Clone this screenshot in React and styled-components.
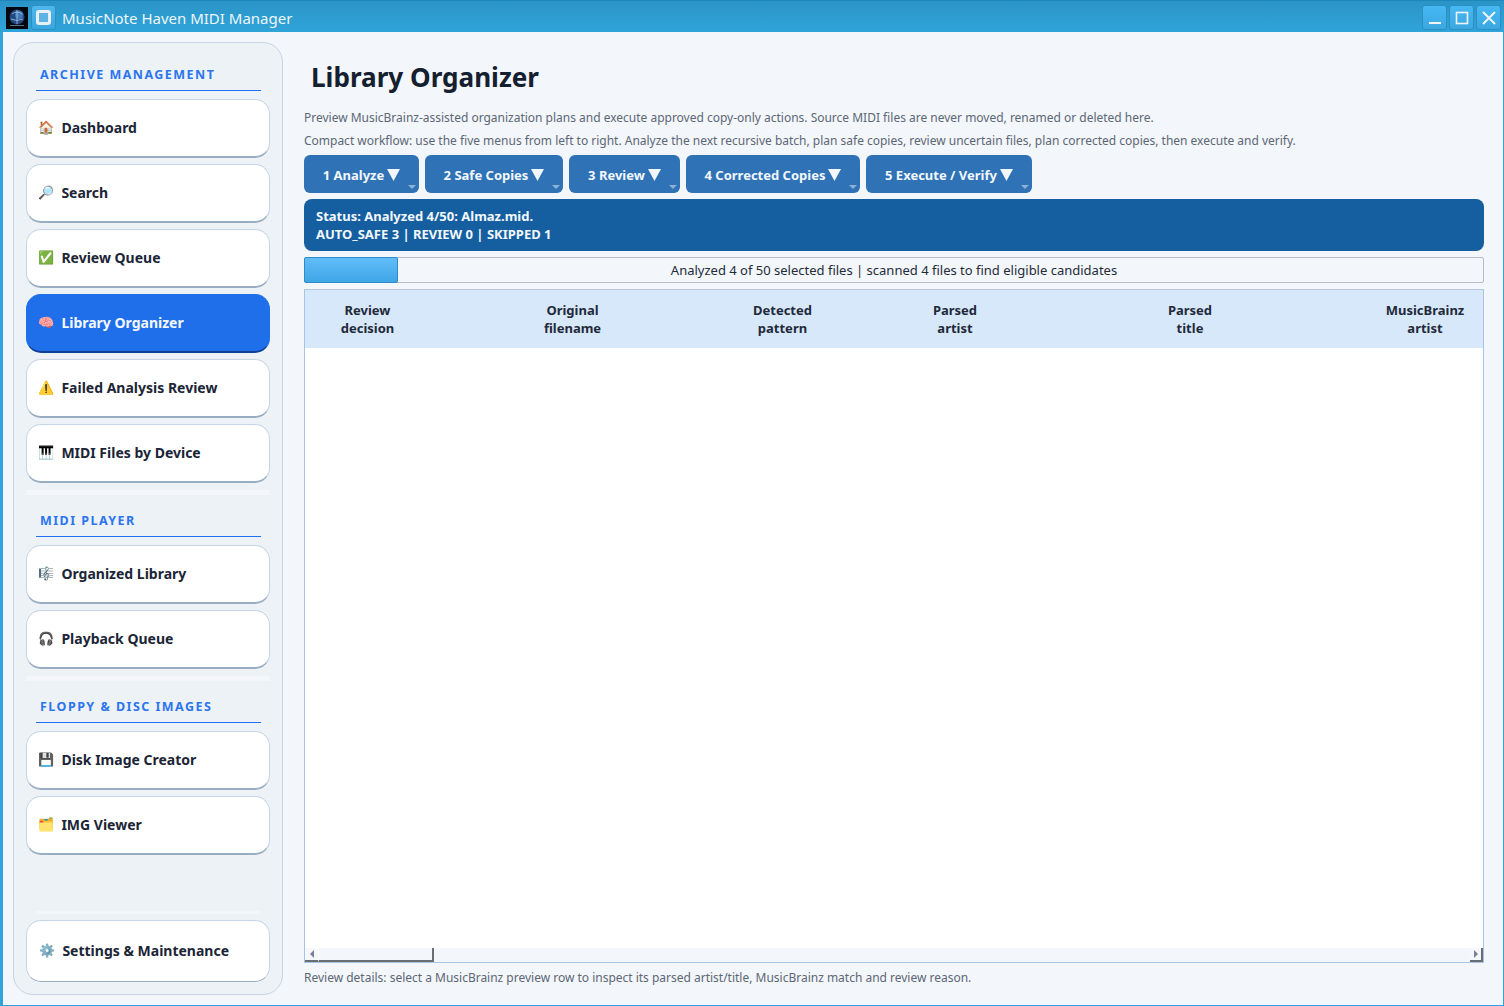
import React from "react";
import styled, { createGlobalStyle } from "styled-components";

const Global = createGlobalStyle`
  html, body { margin: 0; padding: 0; height: 100%; overflow: hidden; }
  body { font-family: "Noto Sans", "Open Sans", sans-serif; background: #f3f6fb; }
  #root { height: 100%; }
`;

const Window = styled.div`
  width: 1504px; height: 1006px; display: flex; flex-direction: column;
  background: #2ea3dc; box-sizing: border-box; overflow: hidden;
`;
const TitleBar = styled.header`
  height: 32px; flex: none; display: flex; align-items: center; box-sizing: border-box;
  padding: 2px 3px 0 6px;
  border-top: 1px solid #1d87bb;
  background: linear-gradient(#2b94c7, #2fa4d9);
`;
const AppLogo = styled.svg`width: 22px; height: 22px; flex: none; display: block;`;
const PinButton = styled.div`
  width: 25px; height: 25px; margin-left: 3px; flex: none; box-sizing: border-box;
  border: 1px solid #2b8fc0; border-radius: 3px; background: linear-gradient(#4fb7ec, #3ba7e0);
  display: flex; align-items: center; justify-content: center;
`;
const PinGlyph = styled.div`
  width: 9px; height: 9px; border: 3px solid #e9eff5; border-radius: 3px; background: #5cb4e4;
`;
const WindowTitle = styled.div`
  margin-left: 6px; flex: 1; color: #eef6fb; font-size: 15px;
`;
const WinButton = styled.div`
  width: 25px; height: 25px; margin-left: 2px; box-sizing: border-box;
  border: 1px solid #2b8fc0; border-radius: 3px; background: linear-gradient(#47b8f4, #3ba7e0);
  display: flex; align-items: center; justify-content: center;
`;
const Body = styled.div`
  flex: 1; min-height: 0; margin: 0 1px 1px 3px; background: #f3f6fb;
  display: flex; padding: 10px 0 10px 10px; gap: 21px; box-sizing: border-box;
`;
const Sidebar = styled.nav`
  width: 270px; flex: none; box-sizing: border-box; border: 1px solid #c6d4e5;
  border-radius: 20px; background: #edf2f7; padding: 17px 12px 12px 12px;
  display: flex; flex-direction: column;
`;
const SectionTitle = styled.div`
  margin: ${p => p.$first ? "6px" : "17px"} 9px 0 10px; padding: 0 0 7px 4px; height: 17px;
  line-height: 17px; border-bottom: 1px solid #1f6ff0; color: #2c75ee;
  font-size: 12.5px; font-weight: 700; letter-spacing: 1.47px;
`;
const NavList = styled.div`
  display: flex; flex-direction: column; gap: 6px; margin-top: 8px;
`;
const NavItem = styled.div`
  height: 59px; box-sizing: border-box; display: flex; align-items: center; padding: 0 0 2px 12px;
  border-radius: 15px; font-size: 14px; font-weight: 700;
  border: 1px solid ${p => p.$active ? "#1f6feb" : "#c6d4e5"};
  border-bottom: 2px solid ${p => p.$active ? "#0f3f96" : "#98adc2"};
  background: ${p => p.$active ? "#1f6feb" : "#ffffff"};
  color: ${p => p.$active ? "#f5f9ff" : "#1b2536"};
`;
const SettingsItem = styled(NavItem)`
  height: 62px; margin-top: 6px; padding-left: 13px; border-bottom: 1px solid #98adc2;
`;
const NavIcon = styled.span`
  width: 15px; height: 15px; font-size: 13px; line-height: 15px; margin-right: 7.4px; flex: none;
  display: flex; align-items: center; justify-content: center;
  font-family: "Noto Color Emoji", "DejaVu Sans", sans-serif; font-weight: 400;
`;
const Separator = styled.div`
  height: 5px; margin-top: 7px; background: #f3f6fb;
`;
const Spacer = styled.div`flex: 1;`;
const ThinSeparator = styled.div`
  height: 3px; margin: 0 10px 0 10px; background: #f3f6fb;
`;
const Main = styled.main`
  flex: 1; min-width: 0; padding: 0 19px 0 0; display: flex; flex-direction: column; position: relative;
`;
const PageTitle = styled.h1`
  margin: 15px 0 0 7px; height: 40px; line-height: 40px; font-size: 26.1px; font-weight: 700; color: #14202f;
`;
const Help = styled.p`
  margin: ${p => p.$first ? "12px" : "5px"} 0 0 0; height: 18px; line-height: 18px; font-size: 11.99px; color: #5c6775;
`;
const MenuRow = styled.div`display: flex; gap: 6px; margin-top: 5px;`;
const MenuButton = styled.div`
  height: 38px; box-sizing: border-box; border-radius: 6px; background: #2f72b6; color: #f2f7fc;
  font-size: 13px; font-weight: 700; display: flex; align-items: center; justify-content: center;
  position: relative; width: ${p => p.$w}px; gap: 3px; padding-top: 1px;
`;
const Caret = styled.svg`width: 13px; height: 12px; display: block;`;
const MenuMark = styled.span`
  position: absolute; right: 3px; bottom: 4px; width: 0; height: 0;
  border-left: 4px solid transparent; border-right: 4px solid transparent; border-top: 4px solid #8db0d6;
`;
const Status = styled.div`
  margin-top: 6px; height: 52px; box-sizing: border-box; padding: 8px 12px; border-radius: 8px;
  background: #155fa0; color: #f2f7fc; font-size: 13px; font-weight: 700; line-height: 18px;
`;
const Progress = styled.div`
  margin-top: 6px; height: 26px; box-sizing: border-box; position: relative; display: flex;
  align-items: center; justify-content: center; background: #f3f6fb; border-radius: 2px;
  border: 1px solid #b5bcc6; font-size: 13px; color: #232c38;
`;
const ProgressFill = styled.div`
  position: absolute; left: -1px; top: -1px; bottom: -1px; width: 94px; box-sizing: border-box;
  border: 1px solid #2f8cc7; border-radius: 2px; background: linear-gradient(#62bdf8, #3ea6e6);
`;
const ProgressText = styled.span`position: relative;`;
const Table = styled.section`
  margin-top: 6px; flex: 1; min-height: 0; box-sizing: border-box; background: #fff;
  border: 1px solid #a8c4e4; border-top-color: #b7c7da; display: flex; flex-direction: column; overflow: hidden;
`;
const HeaderRow = styled.div`
  display: grid; grid-template-columns: 125px 285px 135px 210px 260px 210px; width: 1225px;
  height: 58px; flex: none; background: #d8e8fb;
`;
const HeaderCell = styled.div`
  display: flex; align-items: center; justify-content: center; text-align: center; white-space: pre-line;
  font-size: 13px; font-weight: 700; line-height: 18px; color: #1f2a3a;
`;
const TableBody = styled.div`flex: 1; background: #fff;`;
const ScrollBar = styled.div`
  height: 14px; flex: none; background: #f3f6fb; display: flex; position: relative;
`;
const ScrollEnd = styled.div`
  width: 13px; box-sizing: border-box; display: flex; align-items: center; justify-content: center;
  background: #f5f7fb; border-bottom: 2px solid #6a6d72;
  border-right: ${p => p.$right ? "2px solid #6a6d72" : "none"};
  margin-left: ${p => p.$right ? "auto" : "0"};
`;
const ScrollThumb = styled.div`
  width: 116px; box-sizing: border-box; background: #f3f6fb;
  border-left: 1px solid #fff; border-bottom: 2px solid #6a6d72; border-right: 2px solid #6a6d72;
`;
const Arrow = styled.span`
  width: 0; height: 0; border-top: 4px solid transparent; border-bottom: 4px solid transparent;
  ${p => p.$right ? "border-left: 4px solid #77809a;" : "border-right: 4px solid #77809a;"}
`;
const Details = styled.div`
  height: 18px; line-height: 18px; margin: 6px 0 8px 0; font-size: 11.99px; color: #5c6775;
`;

const menus = [["1 Analyze", 115], ["2 Safe Copies", 138], ["3 Review", 111], ["4 Corrected Copies", 174], ["5 Execute / Verify", 166]];
const headers = ["Review\ndecision", "Original\nfilename", "Detected\npattern", "Parsed\nartist", "Parsed\ntitle", "MusicBrainz\nartist"];

const Nav = ({ icon, label, active }) => (
  <NavItem $active={active}><NavIcon>{icon}</NavIcon>{label}</NavItem>
);

export default function App() {
  return (
    <Window>
      <Global />
      <TitleBar>
        <AppLogo viewBox="0 0 22 22">
          <rect width="22" height="22" fill="#05070f" />
          <circle cx="11" cy="10" r="7.5" fill="#20477f" />
          <circle cx="13" cy="8" r="4" fill="#3f78b8" />
          <path d="M6 7q5-4 10 0M5 12q6 3 12 0M11 3v14" stroke="#a8c6e6" strokeWidth="0.8" fill="none" />
          <rect x="4" y="18" width="14" height="1" fill="#5a6f8c" />
        </AppLogo>
        <PinButton><PinGlyph /></PinButton>
        <WindowTitle>MusicNote Haven MIDI Manager</WindowTitle>
        <WinButton>
          <svg width="14" height="14" viewBox="0 0 14 14"><rect x="1" y="11" width="12" height="2" fill="#f0f4f8" /></svg>
        </WinButton>
        <WinButton>
          <svg width="14" height="14" viewBox="0 0 14 14"><rect x="1.5" y="1.5" width="11" height="11" fill="none" stroke="#f0f4f8" strokeWidth="1.6" /></svg>
        </WinButton>
        <WinButton>
          <svg width="14" height="14" viewBox="0 0 14 14"><path d="M1 1l12 12M13 1L1 13" stroke="#f0f4f8" strokeWidth="2" /></svg>
        </WinButton>
      </TitleBar>
      <Body>
        <Sidebar>
          <SectionTitle $first>ARCHIVE MANAGEMENT</SectionTitle>
          <NavList>
            <Nav icon="🏠" label="Dashboard" />
            <Nav icon="🔎" label="Search" />
            <Nav icon="✅" label="Review Queue" />
            <Nav icon="🧠" label="Library Organizer" active />
            <Nav icon="⚠️" label="Failed Analysis Review" />
            <Nav icon="🎹" label="MIDI Files by Device" />
          </NavList>
          <Separator />
          <SectionTitle>MIDI PLAYER</SectionTitle>
          <NavList>
            <Nav icon="🎼" label="Organized Library" />
            <Nav icon="🎧" label="Playback Queue" />
          </NavList>
          <Separator />
          <SectionTitle>FLOPPY &amp; DISC IMAGES</SectionTitle>
          <NavList>
            <Nav icon="💾" label="Disk Image Creator" />
            <Nav icon="🗂️" label="IMG Viewer" />
          </NavList>
          <Spacer />
          <ThinSeparator />
          <SettingsItem><NavIcon>⚙️</NavIcon>Settings &amp; Maintenance</SettingsItem>
        </Sidebar>
        <Main>
          <PageTitle>Library Organizer</PageTitle>
          <Help $first>Preview MusicBrainz-assisted organization plans and execute approved copy-only actions. Source MIDI files are never moved, renamed or deleted here.</Help>
          <Help>Compact workflow: use the five menus from left to right. Analyze the next recursive batch, plan safe copies, review uncertain files, plan corrected copies, then execute and verify.</Help>
          <MenuRow>
            {menus.map(([label, w]) => (
              <MenuButton key={label} $w={w}>
                {label}
                <Caret viewBox="0 0 13 12"><path d="M0 0h13L6.5 12z" fill="#f2f7fc" /></Caret>
                <MenuMark />
              </MenuButton>
            ))}
          </MenuRow>
          <Status>Status: Analyzed 4/50: Almaz.mid.<br />AUTO_SAFE 3 | REVIEW 0 | SKIPPED 1</Status>
          <Progress>
            <ProgressFill />
            <ProgressText>Analyzed 4 of 50 selected files | scanned 4 files to find eligible candidates</ProgressText>
          </Progress>
          <Table>
            <HeaderRow>
              {headers.map(h => <HeaderCell key={h}>{h}</HeaderCell>)}
            </HeaderRow>
            <TableBody />
            <ScrollBar>
              <ScrollEnd><Arrow /></ScrollEnd>
              <ScrollThumb />
              <ScrollEnd $right><Arrow $right /></ScrollEnd>
            </ScrollBar>
          </Table>
          <Details>Review details: select a MusicBrainz preview row to inspect its parsed artist/title, MusicBrainz match and review reason.</Details>
        </Main>
      </Body>
    </Window>
  );
}
